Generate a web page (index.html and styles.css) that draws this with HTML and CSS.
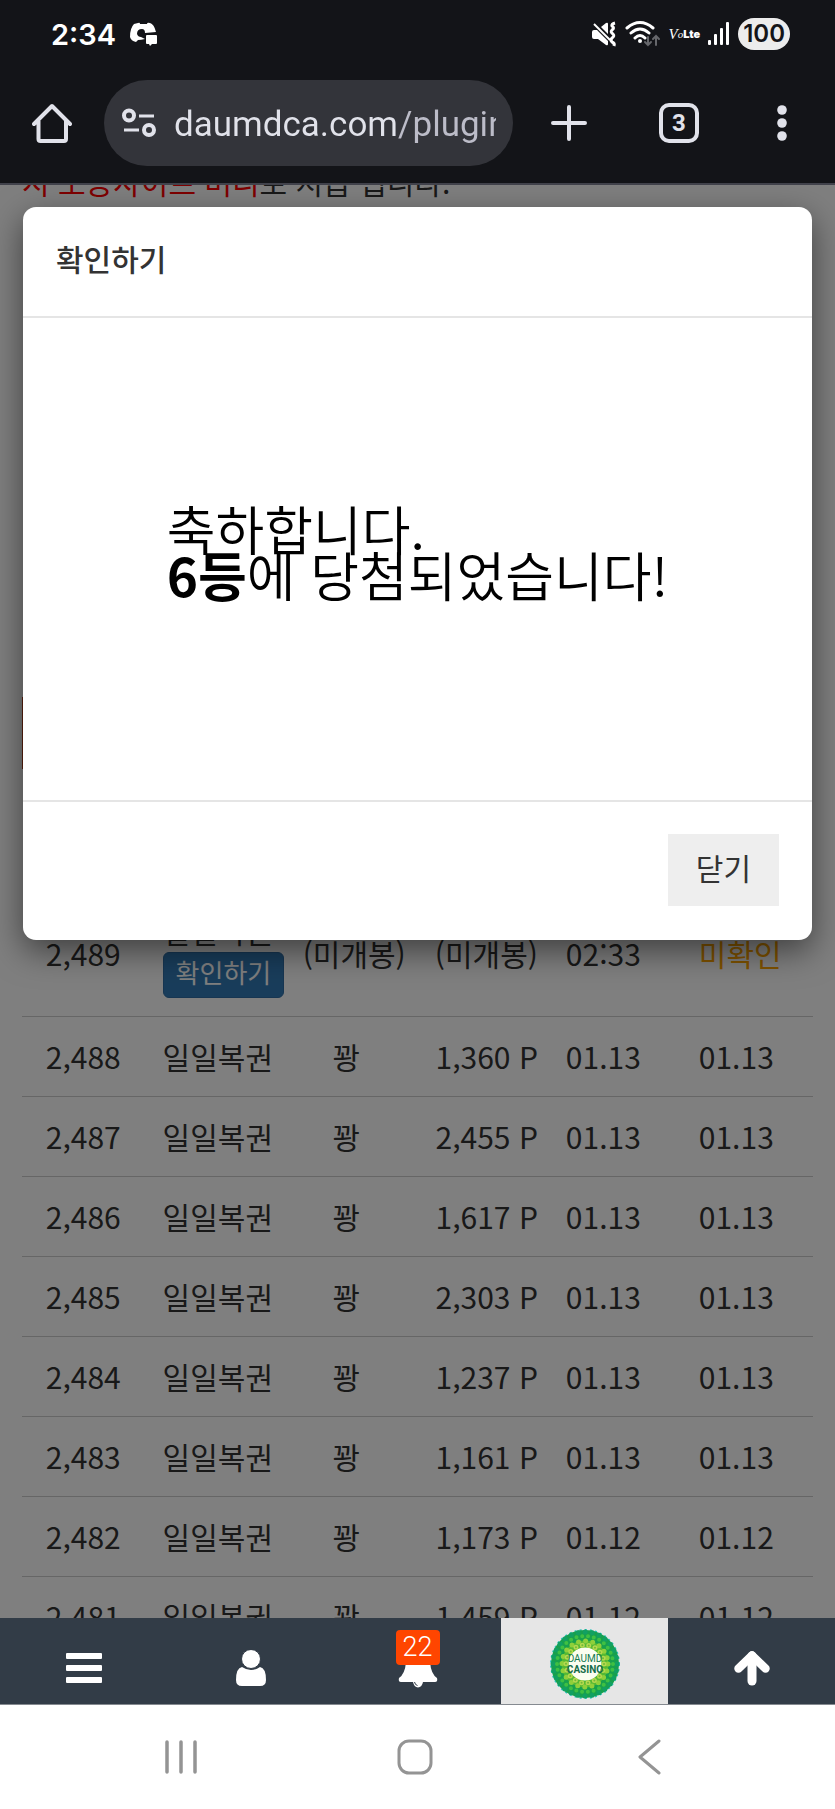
FILE: index.html
```html
<!DOCTYPE html>
<html lang="ko">
<head>
<meta charset="utf-8">
<meta name="viewport" content="width=device-width, initial-scale=1">
<title>확인하기</title>
<link rel="stylesheet" href="styles.css">
</head>
<body>
<div class="phone">
  <header class="browser">
    <div class="status">
      <span class="clock">2:34</span>
      <svg class="discord" width="28" height="24" viewBox="0 0 28 24" aria-hidden="true">
        <path fill="#fff" d="M8 1 Q10 0 10 2 L17 2 Q17 0 20 1 Q24 2 26 10 L15 11 Q15 7 12 7 Q7 7 7 12 Q8 15 11 15 L15 17 Q11 18 8 18 L6 20 Q1 19 0 15 Q0 6 4 2Z"/>
        <circle cx="11" cy="11" r="2.500" fill="#131418"/>
        <path fill="#fff" d="M17 13 H26 Q27 13 27 14 V21 Q27 22 26 22 H22 L20 24 L19 22 H17 Q16 22 16 21 V14 Q16 13 17 13Z"/>
      </svg>
      <span class="spacer"></span>
      <svg width="26" height="26" viewBox="0 0 26 26" fill="none" stroke="#fff" stroke-width="2" aria-hidden="true">
        <path fill="#fff" stroke="none" d="M1 11 Q1 9 3 9 H6 L17 20 V23 Q17 25 15 24 L7 18 H3 Q1 18 1 16Z M10 6 L15 2 Q17 1 17 3 V13Z"/>
        <path d="M3 3 L19 19"/>
        <path d="M24 2 Q20 3 21 5 Q24 7 21 9 Q19 11 22 13 Q24 15 21 17 Q19 19 21 21 Q24 22 23 25" stroke-width="3"/>
      </svg>
      <svg width="36" height="28" viewBox="0 0 36 28" fill="none" stroke="#fff" stroke-width="3" stroke-linecap="round" aria-hidden="true">
        <path d="M2 8 Q15 -3 28 8 M6 13 Q15 5 24 13 M10 18 Q15 13 20 18"/>
        <circle cx="15" cy="21" r="2" fill="#fff" stroke="none"/>
        <path stroke="#66676b" d="M23 17 V25 M20 22 L23 25 L26 22 M31 25 V16 M28 19 L31 16 L34 19" stroke-width="2"/>
      </svg>
      <span class="volte"><i>V</i><i class="o">o</i><b>Lte</b></span>
      <svg width="22" height="24" viewBox="0 0 22 24" fill="#fff" aria-hidden="true">
        <rect x="0" y="18" width="3" height="5" rx="1"/><rect x="6" y="12" width="3" height="11" rx="1"/><rect x="12" y="6" width="3" height="17" rx="1"/><rect x="18" y="0" width="3" height="23" rx="1"/>
      </svg>
      <span class="battery">100</span>
    </div>
    <div class="toolbar">
      <button class="tool home" aria-label="홈">
        <svg width="40" height="40" viewBox="0 0 40 40" fill="none" stroke="#e1e2ea" stroke-width="4" stroke-linejoin="round" stroke-linecap="round"><path d="M2 21 L20 3 L38 21 M6.500 18 V36 Q6.500 38 8.500 38 H32 Q34 38 34 36 V18"/></svg>
      </button>
      <div class="omnibox">
        <svg width="34" height="30" viewBox="0 0 34 30" fill="none" stroke="#e1e2ea" stroke-width="4" aria-hidden="true"><circle cx="7" cy="7.500" r="5"/><path d="M17 8 H32 M2 22 H17" stroke-width="3"/><circle cx="27" cy="22" r="5"/></svg>
        <input class="url" type="text" aria-label="주소" value="daumdca.com/plugin">
      </div>
      <button class="tool add" aria-label="새 탭">
        <svg width="36" height="36" viewBox="0 0 36 36" stroke="#e1e2ea" stroke-width="4" stroke-linecap="round"><path d="M18 2 V34 M2 18 H34"/></svg>
      </button>
      <button class="tool tabs" aria-label="탭 3개"><span class="count">3</span></button>
      <button class="tool more" aria-label="메뉴">
        <svg width="10" height="36" viewBox="0 0 10 36" fill="#e1e2ea"><circle cx="5" cy="5" r="4.800"/><circle cx="5" cy="18" r="4.800"/><circle cx="5" cy="31" r="4.800"/></svg>
      </button>
    </div>
  </header>

  <main class="page">
    <p class="notice"><em>시 보증사이트 머니</em>로 지급 됩니다.</p>
    <div class="banner"></div>
    <table class="log">
      <colgroup><col class="c-no"><col class="c-name"><col class="c-rank"><col class="c-point"><col class="c-time"><col></colgroup>
      <tbody>
        <tr><td>2,489</td><td>일일복권<button class="check">확인하기</button></td><td>(미개봉)</td><td>(미개봉)</td><td>02:33</td><td class="pending">미확인</td></tr>
        <tr><td>2,488</td><td>일일복권</td><td class="miss">꽝</td><td>1,360 P</td><td>01.13</td><td>01.13</td></tr>
        <tr><td>2,487</td><td>일일복권</td><td class="miss">꽝</td><td>2,455 P</td><td>01.13</td><td>01.13</td></tr>
        <tr><td>2,486</td><td>일일복권</td><td class="miss">꽝</td><td>1,617 P</td><td>01.13</td><td>01.13</td></tr>
        <tr><td>2,485</td><td>일일복권</td><td class="miss">꽝</td><td>2,303 P</td><td>01.13</td><td>01.13</td></tr>
        <tr><td>2,484</td><td>일일복권</td><td class="miss">꽝</td><td>1,237 P</td><td>01.13</td><td>01.13</td></tr>
        <tr><td>2,483</td><td>일일복권</td><td class="miss">꽝</td><td>1,161 P</td><td>01.13</td><td>01.13</td></tr>
        <tr><td>2,482</td><td>일일복권</td><td class="miss">꽝</td><td>1,173 P</td><td>01.12</td><td>01.12</td></tr>
        <tr><td>2,481</td><td>일일복권</td><td class="miss">꽝</td><td>1,459 P</td><td>01.12</td><td>01.12</td></tr>
      </tbody>
    </table>
    <div class="backdrop">
      <section class="modal" role="dialog" aria-labelledby="modal-title">
        <h1 class="modal-title" id="modal-title">확인하기</h1>
        <div class="modal-body"><p class="message">축하합니다.<br><b>6등</b>에 당첨되었습니다!</p></div>
        <div class="modal-footer"><button class="close">닫기</button></div>
      </section>
    </div>
  </main>

  <nav class="tabbar">
    <a href="#menu" aria-label="메뉴"><svg width="36" height="36" viewBox="0 0 36 36" fill="#fff"><rect y="3" width="36" height="6" rx="1"/><rect y="15" width="36" height="6" rx="1"/><rect y="27" width="36" height="6" rx="1"/></svg></a>
    <a href="#my" aria-label="내 정보"><svg width="30" height="36" viewBox="0 0 30 36" fill="#fff"><path d="M6 17 Q15 23 24 17 Q30 18 30 30 Q30 36 24 36 H6 Q0 36 0 30 Q0 18 6 17Z"/><circle cx="15" cy="9" r="9.500" stroke="#323c47" stroke-width="1"/></svg></a>
    <a href="#alerts" aria-label="알림 22개"><svg width="40" height="40" viewBox="0 0 40 40" fill="#fff"><path d="M20 1 Q31 4 32 14 Q33 26 39 30 Q40 34 37 34 H25 Q24 39 20 39.500 Q16 39 15 34 H3 Q0 34 1 30 Q7 26 8 14 Q9 4 20 1Z"/><path d="M16.500 34 Q17 37 19.500 37.500" fill="none" stroke="#323c47"/></svg><span class="badge">22</span></a>
    <a href="#home" class="current" aria-label="DAUMD CASINO">
      <svg width="72" height="72" viewBox="0 0 72 72">
        <g fill="none">
          <circle cx="36" cy="36" r="33" stroke="#2cc4c0" stroke-width="4" stroke-dasharray="2 3"/>
          <circle cx="36" cy="36" r="28" stroke="#18a04c" stroke-width="12"/>
          <g stroke-linecap="round">
            <circle cx="36" cy="36" r="32" stroke="#12a062" stroke-width="5" stroke-dasharray="0 7.180"/>
            <circle cx="36" cy="36" r="28" stroke="#3fc043" stroke-width="4" stroke-dasharray="0 5.860"/>
            <circle cx="36" cy="36" r="20" fill="#fbfdf0" stroke="#55b934" stroke-width="7"/>
            <circle cx="36" cy="36" r="23" stroke="#8fd03a" stroke-width="5" stroke-dasharray="0 7.220"/>
            <circle cx="36" cy="36" r="19" stroke="#b5d84e" stroke-width="5" stroke-dasharray="0 6.630"/>
            <circle cx="36" cy="36" r="19" stroke="#6fba3a" stroke-width="2" stroke-dasharray="0 6.630"/>
          </g>
          <circle cx="36" cy="36" r="16" fill="#fbfdf0"/>
        </g>
        <text x="36" y="34" text-anchor="middle" class="logo-top">DAUMD</text>
        <text x="36" y="45" text-anchor="middle" class="logo-bottom">CASINO</text>
      </svg>
    </a>
    <a href="#top" aria-label="맨 위로"><svg width="38" height="36" viewBox="0 0 38 36" fill="none" stroke="#fff" stroke-linejoin="round" stroke-linecap="round"><path d="M19 6 V31" stroke-width="9"/><path d="M5.500 18.500 L19 5.500 L32.500 18.500" stroke-width="8.500"/></svg></a>
  </nav>

  <nav class="android">
    <button aria-label="최근 앱"><svg width="32" height="34" viewBox="0 0 32 34" stroke="#949494" stroke-width="3.500" stroke-linecap="round"><path d="M2 2 V32 M16 2 V32 M30 2 V32"/></svg></button>
    <button aria-label="홈 화면"><svg width="36" height="36" viewBox="0 0 36 36" fill="none" stroke="#949494" stroke-width="3"><rect x="2" y="2" width="32" height="32" rx="10"/></svg></button>
    <button aria-label="뒤로"><svg width="24" height="36" viewBox="0 0 24 36" fill="none" stroke="#949494" stroke-width="3" stroke-linecap="round" stroke-linejoin="round"><path d="M21 2 L2 18 L21 34"/></svg></button>
  </nav>
</div>
</body>
</html>
```
FILE: styles.css
```css
* { box-sizing: border-box; }
body { margin: 0; font-family: "Noto Sans CJK KR", sans-serif; font-size: 30px; line-height: 43px; color: #333; background: #fff; }
button { font: inherit; color: inherit; border: 0; padding: 0; background: none; }
svg { display: block; flex: none; }

.phone { display: flex; flex-direction: column; height: 100vh; }

/* Browser chrome */
.browser { background: #131418; border-bottom: 2px solid #41424b; }
.status { display: flex; align-items: center; height: 68px; padding: 0 45px 0 51px; gap: 8px; font-family: Inter, sans-serif; color: #fff; }
.clock { font-size: 29px; font-weight: 600; }
.discord { margin-left: 6px; }
.spacer { flex: 1; }
.volte { display: flex; font-family: "Liberation Serif", serif; font-size: 15px; line-height: 20px; }
.volte .o { font-size: 11px; }
.volte b { font-family: Inter, sans-serif; font-size: 11px; font-weight: 900; }
.battery { height: 32px; padding: 0 5px; border-radius: 16px; background: #ececec; color: #131418; font-size: 24px; font-weight: 600; line-height: 32px; }
.toolbar { display: flex; align-items: center; padding: 12px 4px 17px 0; }
.tool { display: flex; align-items: center; justify-content: center; height: 86px; }
.home { width: 104px; }
.add { width: 112px; }
.tabs { width: 108px; }
.more { width: 98px; }
.count { width: 40px; height: 40px; border: 4px solid #e1e2ea; border-radius: 10px; color: #e1e2ea; font: 700 24px/32px Roboto, sans-serif; text-align: center; }
.omnibox { display: flex; align-items: center; flex: 1; min-width: 0; height: 86px; padding: 0 17px 0 18px; gap: 18px; border-radius: 43px; background: #33343a; }
.url { flex: 1; min-width: 0; height: 52px; padding: 2px 0 0; border: 0; outline: 0; font: 35px/50px Roboto, sans-serif; color: transparent; background: linear-gradient(90deg, #e1e2ea 224px, #bcbcc8 224px) text; }

/* Page under the dialog */
.page { position: relative; flex: 1; min-height: 0; overflow: hidden; padding: 0 22px; background: #fff; }
.notice { margin: -25px 0 0; }
.notice em { font-style: normal; color: #f00; }
.banner { width: 80%; height: 72px; margin: 494px 0 122px; background: #b5401c; }
.log { width: 100%; border-collapse: separate; border-spacing: 0; table-layout: fixed; }
.c-no { width: 15.5%; }
.c-name { width: 18%; }
.c-rank { width: 17%; }
.c-point { width: 17%; }
.c-time { width: 12%; }
.log td { padding: 18px 0; border-bottom: 1px solid #ccc; text-align: center; white-space: nowrap; }
.log td:nth-child(2) { padding-left: 18px; text-align: left; }
.log td:nth-child(4) { padding-right: 18px; text-align: right; }
.log td:nth-child(6) { padding-left: 48px; text-align: left; }
.log .miss { padding-right: 16px; }
.log .pending { color: orange; }
.check { display: block; height: 46px; padding: 0 12px 6px; border: 1px solid #2e6da4; border-radius: 6px; background: #337ab7; color: #fff; font-size: 26px; line-height: 38px; }

/* Dialog */
.backdrop { position: absolute; inset: 0; padding: 22px 23px; background: rgba(0, 0, 0, .5); }
.modal { border-radius: 13px; background: #fff; box-shadow: 0 11px 33px rgba(0, 0, 0, .5); }
.modal-title { margin: 0; padding: 30px 33px 36px; border-bottom: 2px solid #e5e5e5; font-size: 30px; font-weight: 500; line-height: 43px; }
.modal-body { display: flex; align-items: center; justify-content: center; height: 482px; padding-bottom: 16px; }
.message { margin: 0; font-size: 53px; font-weight: 350; line-height: 46px; color: #000; }
.modal-footer { display: flex; justify-content: flex-end; padding: 32px 33px 34px; border-top: 2px solid #e5e5e5; }
.close { height: 72px; padding: 0 28px 6px; background: #eee; }

/* Site tab bar */
.tabbar { display: grid; grid-template-columns: repeat(5, 1fr); height: 87px; background: #323c47; border-bottom: 1px solid #858a90; }
.tabbar a { position: relative; display: flex; align-items: center; justify-content: center; padding-top: 14px; }
.tabbar .current { padding-top: 6px; background: #e6e6e6; }
.badge { position: absolute; top: 12px; left: 50%; width: 44px; height: 35px; margin-left: -22px; border-radius: 4px; background: #ff4500; color: #fff; font: 300 27px/35px Roboto, sans-serif; text-align: center; }
.logo-top { font: 10px Roboto, sans-serif; fill: #157a50; }
.logo-bottom { font: bold 10px Roboto, sans-serif; fill: #146b48; }

/* System navigation */
.android { display: grid; grid-template-columns: repeat(3, 1fr); height: 104px; padding: 0 68px 0 64px; background: #fff; }
.android button { display: flex; align-items: center; justify-content: center; }
```
